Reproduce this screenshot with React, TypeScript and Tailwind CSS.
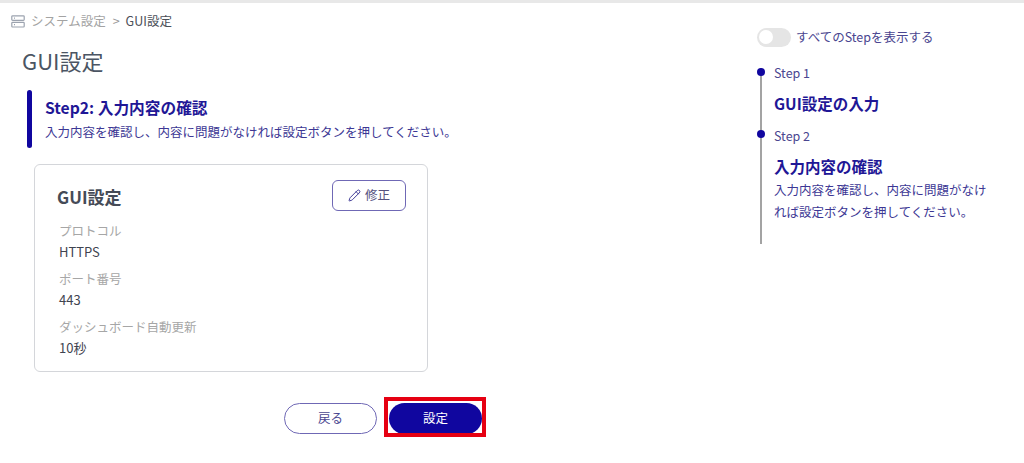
import React from 'react';
import { Pencil } from 'lucide-react';

const font = "font-['Noto_Sans_CJK_JP','Noto_Sans',sans-serif]";

const fields = [
  { label: 'プロトコル', value: 'HTTPS' },
  { label: 'ポート番号', value: '443' },
  { label: 'ダッシュボード自動更新', value: '10秒' },
];

const ServerIcon = () => (
  <svg width="14" height="13" viewBox="0 0 14 13" fill="none" stroke="#9ca3af" strokeWidth="1.2">
    <rect x="0.8" y="0.8" width="12.4" height="4.6" rx="0.8" />
    <rect x="0.8" y="7.4" width="12.4" height="4.6" rx="0.8" />
    <path d="M3 3.1h1M3 9.7h1" />
  </svg>
);

const App: React.FC = () => {
  return (
    <div className={`${font} w-[1024px] h-[463px] overflow-hidden bg-white border-t-[3px] border-[#e8e8e8] flex`}>
      <div className="w-[740px] pl-[11px]">
        <div className="flex items-center h-[18px] mt-[9px] text-[12.5px] leading-none">
          <ServerIcon />
          <span className="ml-[6px] text-[#a3a3a3]">システム設定</span>
          <span className="ml-[7px] text-[#9a9a9a]">&gt;</span>
          <span className="ml-[6px] text-[#4b4f58]">GUI設定</span>
        </div>

        <h1 className="ml-[11px] mt-[15px] text-[22px] leading-[30px] text-[#4b5563]">GUI設定</h1>

        <div className="ml-[16px] mt-[15px] flex h-[58px] w-[500px]">
          <div className="w-[5px] rounded-full bg-[#10069f]" />
          <div className="ml-[13px] pt-[7px]">
            <p className="text-[15.7px] leading-[22px] font-bold text-[#1f1796]">Step2: 入力内容の確認</p>
            <p className="mt-[4px] text-[12.5px] leading-[18px] text-[#3c3794]">入力内容を確認し、内容に問題がなければ設定ボタンを押してください。</p>
          </div>
        </div>

        <div className="ml-[23px] mt-[16px] w-[394px] h-[208px] rounded-[6px] border border-[#d4d6da] pl-[22px] pr-[21px] pt-[15px]">
          <div className="flex items-center justify-between h-[31px]">
            <h2 className="pt-[3px] text-[17px] font-bold text-[#454b57]">GUI設定</h2>
            <button className="flex items-center justify-center gap-[4px] w-[74px] h-[31px] rounded-[6px] border border-[#6f68b5] text-[12.5px] text-[#55527f]">
              <Pencil size={13} strokeWidth={1.8} className="text-[#3c3794]" />
              修正
            </button>
          </div>
          <div className="mt-[8px]">
            {fields.map(f => (
              <div key={f.label} className="h-[48px] pl-[2px]">
                <p className="text-[12.5px] leading-[23px] text-[#a6a6a6]">{f.label}</p>
                <p className="text-[13px] leading-[20px] text-[#3f4450]">{f.value}</p>
              </div>
            ))}
          </div>
        </div>

        <div className="flex ml-[273px] mt-[31px] gap-[12px]">
          <button className="w-[93px] h-[31px] rounded-full border border-[#6f68b5] bg-white text-[12.5px] text-[#4a4690]">戻る</button>
          <div className="relative">
            <button className="w-[93px] h-[31px] rounded-full bg-[#10069f] text-[12.5px] text-white">設定</button>
            <div className="absolute -left-[5px] -top-[6px] w-[102px] h-[40px] border-[4px] border-[#e60012]" />
          </div>
        </div>
      </div>

      <div className="pl-[17px] pt-[24px] flex-1">
        <div className="flex items-center h-[20px]">
          <div className="w-[34px] h-[19px] rounded-full bg-[#e5e5e5] flex items-center pl-[2px]">
            <div className="w-[14px] h-[14px] rounded-full bg-white" />
          </div>
          <span className="ml-[5px] text-[12.5px] text-[#4a4690]">すべてのStepを表示する</span>
        </div>

        <div className="relative mt-[18px] ml-[3px] w-[240px] pl-[14px]">
          <div className="absolute left-0 top-[3px] w-[2px] h-[176px] bg-[#a3a3a3]" />
          <div className="absolute -left-[3px] top-[3px] w-[8px] h-[8px] rounded-full bg-[#10069f]" />
          <div className="absolute -left-[3px] top-[65px] w-[8px] h-[8px] rounded-full bg-[#10069f]" />
          <p className="text-[12.5px] leading-[16px] text-[#4a4690]">Step 1</p>
          <p className="mt-[12px] text-[15.5px] leading-[20px] font-bold text-[#1f1796]">GUI設定の入力</p>
          <p className="mt-[15px] text-[12.5px] leading-[16px] text-[#4a4690]">Step 2</p>
          <p className="mt-[12px] text-[15.5px] leading-[20px] font-bold text-[#1f1796]">入力内容の確認</p>
          <p className="mt-[3px] w-[214px] text-[12.5px] leading-[22px] text-[#3c3794]">入力内容を確認し、内容に問題がなければ設定ボタンを押してください。</p>
        </div>
      </div>
    </div>
  );
};

export default App;
